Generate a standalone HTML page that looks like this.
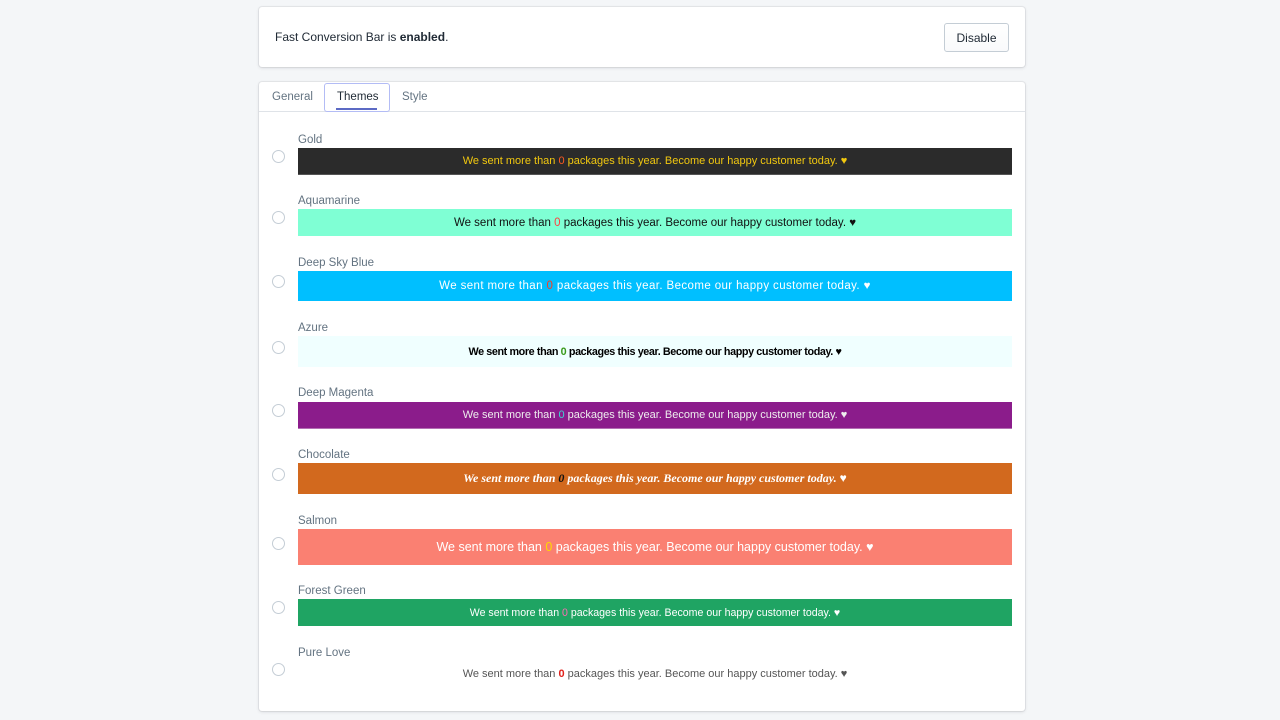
<!DOCTYPE html>
<html><head><style>
body{margin:0;background:#f4f6f8;font-family:"Liberation Sans",sans-serif;width:1280px;height:720px;overflow:hidden;position:relative}
.card{position:absolute;left:259px;width:766px;background:#fff;border-radius:3px;box-shadow:0 0 0 1px rgba(63,63,68,.07),0 1px 3px rgba(63,63,68,.15)}
.lbl{position:absolute;left:298px;font-size:11.5px;color:#637381}
.bar{position:absolute;left:298px;width:714px;text-align:center;font-size:11px;display:flex;align-items:center;justify-content:center}
.r{position:absolute;left:272px;width:11px;height:11px;border:1px solid #c4cdd5;border-radius:50%;background:#fff}
</style></head><body>
<div class="card" style="top:7px;height:60px">
<div style="position:absolute;left:16px;top:23px;font-size:12px;color:#212b36">Fast Conversion Bar is <b>enabled</b>.</div>
<div style="position:absolute;right:16px;top:16px;width:63px;height:27px;border:1px solid #c4cdd5;border-radius:3px;background:linear-gradient(#fff,#f9fafb);font-size:12px;color:#212b36;display:flex;align-items:center;justify-content:center">Disable</div>
</div>
<div class="card" style="top:82px;height:629px">
<div style="position:absolute;left:0;right:0;top:29px;border-top:1px solid #dfe3e8"></div>
<div style="position:absolute;left:13px;top:9px;font-size:11.5px;color:#637381">General</div>
<div style="position:absolute;left:65px;top:1px;width:64px;height:27px;border:1px solid #b3bcf5;border-radius:3px"></div>
<div style="position:absolute;left:78px;top:9px;font-size:11.5px;color:#212b36">Themes</div>
<div style="position:absolute;left:77px;top:26px;width:41px;height:2px;background:#5c6ac4"></div>
<div style="position:absolute;left:143px;top:9px;font-size:11.5px;color:#637381">Style</div>
</div>

<div class="lbl" style="top:134px">Gold</div><div class="r" style="top:150px"></div>
<div class="bar" style="top:148px;height:26px;background:#2b2b2b;color:#f2c80f;border-bottom:1px solid #555">We sent more than&nbsp;<span style="color:#ff5a1f">0</span>&nbsp;packages this year. Become our happy customer today. ♥</div>

<div class="lbl" style="top:195px">Aquamarine</div><div class="r" style="top:211px"></div>
<div class="bar" style="top:209px;height:27px;background:#7fffd4;color:#111;font-size:11.5px">We sent more than&nbsp;<span style="color:#ff4040">0</span>&nbsp;packages this year. Become our happy customer today. ♥</div>

<div class="lbl" style="top:257px">Deep Sky Blue</div><div class="r" style="top:275px"></div>
<div class="bar" style="top:271px;height:30px;background:#00bfff;color:#fff;font-size:11.5px;letter-spacing:.4px">We sent more than&nbsp;<span style="color:#ff3b1f">0</span>&nbsp;packages this year. Become our happy customer today. ♥</div>

<div class="lbl" style="top:322px">Azure</div><div class="r" style="top:341px"></div>
<div class="bar" style="top:336px;height:31px;background:#f0ffff;color:#000;font-weight:bold;letter-spacing:-.4px;font-size:10.8px">We sent more than&nbsp;<span style="color:#3a9a1a">0</span>&nbsp;packages this year. Become our happy customer today. ♥</div>

<div class="lbl" style="top:387px">Deep Magenta</div><div class="r" style="top:404px"></div>
<div class="bar" style="top:402px;height:26px;background:#8b1c8b;color:#eee;border-bottom:1px solid #b36fb3">We sent more than&nbsp;<span style="color:#3dd6d0">0</span>&nbsp;packages this year. Become our happy customer today. ♥</div>

<div class="lbl" style="top:449px">Chocolate</div><div class="r" style="top:468px"></div>
<div class="bar" style="top:463px;height:31px;background:#d2691e;color:#fff;font-style:italic;font-weight:bold;font-family:'Liberation Serif',serif;font-size:12px">We sent more than&nbsp;<span style="color:#111">0</span>&nbsp;packages this year. Become our happy customer today. ♥</div>

<div class="lbl" style="top:515px">Salmon</div><div class="r" style="top:537px"></div>
<div class="bar" style="top:529px;height:36px;background:#fa8072;color:#fff;font-size:12.5px">We sent more than&nbsp;<span style="color:#ffd700">0</span>&nbsp;packages this year. Become our happy customer today. ♥</div>

<div class="lbl" style="top:585px">Forest Green</div><div class="r" style="top:601px"></div>
<div class="bar" style="top:599px;height:27px;background:#1fa463;color:#fff;font-size:10.6px">We sent more than&nbsp;<span style="color:#ff69b4">0</span>&nbsp;packages this year. Become our happy customer today. ♥</div>

<div class="lbl" style="top:647px">Pure Love</div><div class="r" style="top:663px"></div>
<div class="bar" style="top:662px;height:24px;color:#555">We sent more than&nbsp;<span style="color:#e0201a;font-weight:bold">0</span>&nbsp;packages this year. Become our happy customer today. ♥</div>
</body></html>
